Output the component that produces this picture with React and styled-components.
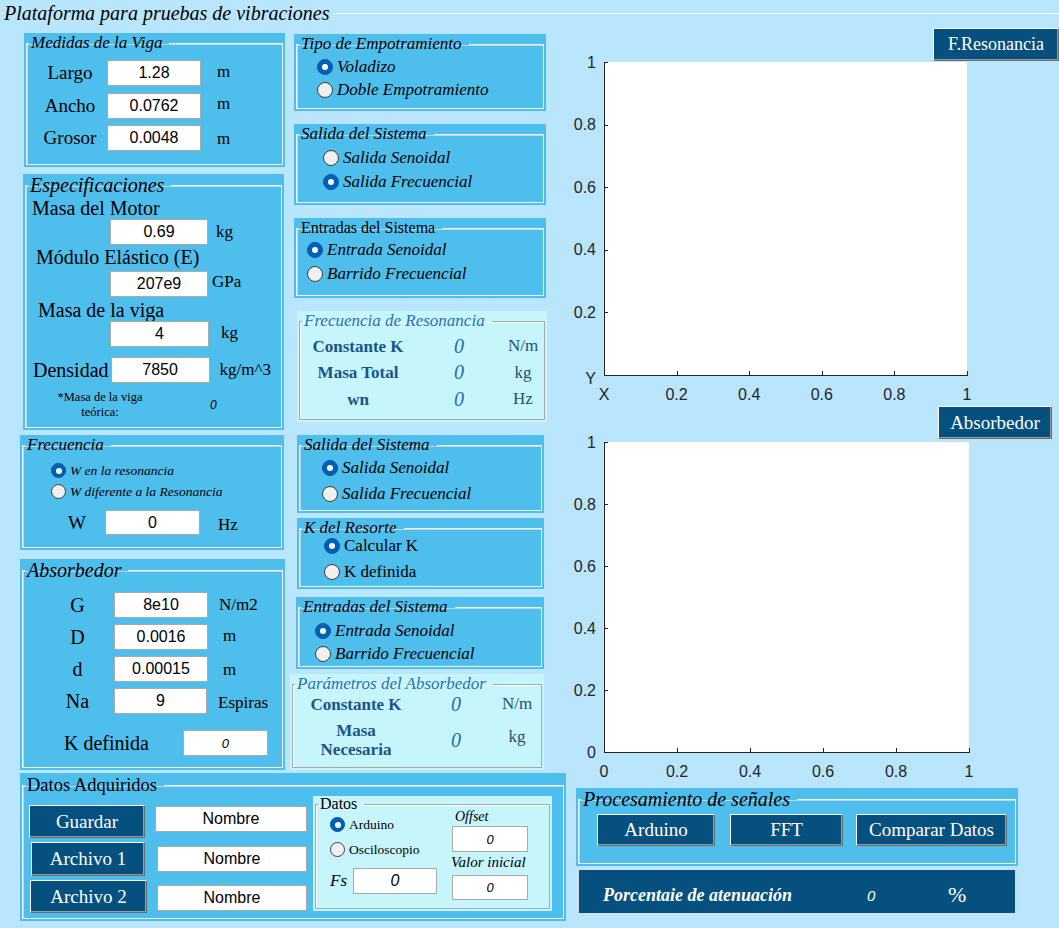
import React from "react"
import styled, { createGlobalStyle } from "styled-components"

const SERIF = '"Liberation Serif", "Times New Roman", serif'
const SANS = '"Liberation Sans", Arial, sans-serif'

const C = {
	page: "#b9e5fd",
	panel: "#4ebeed",
	dark: "#05507f",
	cyan: "#c6f5fc",
	title: "#2272b8",
	label: "#17548a",
	value: "#1f6cb0",
	unit: "#274e72",
}

const GlobalStyle = createGlobalStyle`
	html, body {
		margin: 0;
		padding: 0;
		background: ${C.page};
	}
	body {
		font-family: ${SERIF};
		overflow: hidden;
	}
`

const Window = styled.div`
	width: 1059px;
	height: 928px;
	overflow: hidden;
	background: ${C.page};
	color: #000;
`

const Header = styled.div`
	display: flex;
	align-items: center;
	height: 26px;
`

const HeaderRule = styled.div`
	height: 1px;
	background: #fff;
	width: ${p => (p.$w ? `${p.$w}px` : "auto")};
	flex: ${p => (p.$w ? "none" : 1)};
`

const HeaderTitle = styled.span`
	font-style: italic;
	font-size: 20px;
	padding: 0 4px 0 1px;
	line-height: 26px;
`

const Content = styled.div`
	display: flex;
	margin-top: 2px;
`

const LeftBlock = styled.div`
	width: 570px;
	display: flex;
	flex-direction: column;
	flex: none;
`

const TopRow = styled.div`
	display: flex;
`

const Column = styled.div`
	display: flex;
	flex-direction: column;
	width: ${p => p.$w}px;
	flex: none;
`

const PanelShell = styled.div`
	box-sizing: border-box;
	width: ${p => p.$w}px;
	height: ${p => p.$h}px;
	margin: ${p => p.$mt || 0}px 0 0 ${p => p.$ml || 0}px;
	padding: 0 2px 2px;
	background: ${p => (p.$light ? C.cyan : C.panel)};
	display: flex;
	flex-direction: column;
	flex: none;
`

const Frame = styled.fieldset`
	flex: 1;
	margin: 0;
	padding: 0;
	min-width: 0;
	border: 1px solid ${p => (p.$light ? "#a8a8a8" : "#f2f2f2")};
	box-shadow: ${p => (p.$light ? "inset 1px 1px 0 #fff" : "inset 1px 1px 0 #b8d8e8")};
`

const Legend = styled.legend`
	margin-left: 2px;
	padding: 0 7px 0 2px;
	font-family: ${SERIF};
	font-size: ${p => p.$size || 17}px;
	line-height: ${p => p.$lh || 20}px;
	font-style: ${p => (p.$plain ? "normal" : "italic")};
	color: ${p => p.$color || "#000"};
	white-space: nowrap;
`

function Panel({ title, w, h, mt, ml, light, size, lh, plain, color, children }) {
	return (
		<PanelShell $w={w} $h={h} $mt={mt} $ml={ml} $light={light}>
			<Frame $light={light}>
				<Legend $size={size} $lh={lh} $plain={plain} $color={color}>{title}</Legend>
				{children}
			</Frame>
		</PanelShell>
	)
}

const FormGrid = styled.div`
	display: grid;
	grid-template-columns: ${p => p.$cols};
	grid-auto-rows: ${p => p.$row || 26}px;
	${p => p.$rows && `grid-template-rows: ${p.$rows};`}
	row-gap: ${p => p.$gap || 0}px;
	align-items: center;
	padding: ${p => p.$pt || 0}px 0 0 ${p => p.$pl || 0}px;
`

const Label = styled.div`
	font-size: ${p => p.$size || 19}px;
	line-height: ${p => p.$lh || 22}px;
	text-align: ${p => p.$align || "center"};
	margin: ${p => p.$mt || 0}px 0 0 ${p => p.$ml || 0}px;
	white-space: nowrap;
	flex: none;
`

const Field = styled.div`
	box-sizing: border-box;
	width: ${p => p.$w}px;
	height: ${p => p.$h || 26}px;
	margin: ${p => p.$mt || 0}px 0 0 ${p => p.$ml || 0}px;
	background: #fff;
	border: 1px solid #a9a9a9;
	display: flex;
	align-items: center;
	justify-content: center;
	font-family: ${SANS};
	font-size: ${p => p.$size || 16}px;
	font-style: ${p => (p.$italic ? "italic" : "normal")};
	color: #000;
	flex: none;
	align-self: ${p => (p.$center ? "center" : "flex-start")};
`

const Unit = styled.span`
	font-size: 17px;
	margin-left: ${p => p.$ml || 0}px;
	margin-top: ${p => p.$mt || 0}px;
	white-space: nowrap;
`

const FieldRow = styled.div`
	display: flex;
	align-items: center;
	margin: ${p => p.$mt || 0}px 0 0 ${p => p.$ml || 0}px;
`

const Note = styled.div`
	width: 96px;
	margin-left: 26px;
	font-size: 12.5px;
	line-height: 15px;
	text-align: center;
`

const SmallValue = styled.span`
	font-family: ${SANS};
	font-style: italic;
	font-size: 12px;
	margin-left: ${p => p.$ml || 0}px;
`

const RadioList = styled.div`
	display: flex;
	flex-direction: column;
	margin-top: ${p => p.$pt || 0}px;
	padding-left: ${p => p.$pl || 0}px;
`

const RadioRow = styled.div`
	display: flex;
	align-items: center;
	gap: 4px;
	height: ${p => p.$h}px;
	font-size: ${p => p.$size || 17}px;
	font-style: ${p => (p.$plain ? "normal" : "italic")};
	white-space: nowrap;
`

const RadioDot = styled.span`
	position: relative;
	box-sizing: border-box;
	flex: none;
	width: ${p => p.$d || 16}px;
	height: ${p => p.$d || 16}px;
	border-radius: 50%;
	background: ${p => (p.$on ? "#0060b8" : "#f0f0f0")};
	border: 1px solid ${p => (p.$on ? "#0052a0" : "#3c3c3c")};

	&::after {
		content: "";
		display: ${p => (p.$on ? "block" : "none")};
		position: absolute;
		left: 50%;
		top: 50%;
		width: 6px;
		height: 6px;
		margin: -3px 0 0 -3px;
		border-radius: 50%;
		background: #fff;
	}
`

function Radio({ on, label, h, size, plain, d }) {
	return (
		<RadioRow $h={h} $size={size} $plain={plain}>
			<RadioDot $on={on} $d={d} />
			{label}
		</RadioRow>
	)
}

const InfoLabel = styled.div`
	font-weight: bold;
	font-size: 17px;
	line-height: 19px;
	color: ${C.label};
	text-align: center;
`

const InfoValue = styled.div`
	font-style: italic;
	font-size: 20px;
	color: ${C.value};
	text-align: center;
`

const InfoUnit = styled.div`
	font-size: 17px;
	color: ${C.unit};
	text-align: center;
	margin-top: ${p => p.$mt || 0}px;
`

const DarkButton = styled.button`
	box-sizing: border-box;
	flex: none;
	width: ${p => p.$w}px;
	height: ${p => p.$h || 33}px;
	margin: ${p => p.$mt || 0}px 0 0 ${p => p.$ml || 0}px;
	padding: 0;
	background: ${C.dark};
	color: #fff;
	border: 1px solid;
	border-color: #ffffff #6a6a6a #6a6a6a #ffffff;
	box-shadow: inset -1px -1px 0 #9a9a9a;
	font-family: ${SERIF};
	font-size: ${p => p.$size || 19}px;
	white-space: nowrap;
	cursor: pointer;
`

const ButtonBar = styled.div`
	display: flex;
	justify-content: flex-end;
	height: 33px;
	padding-right: ${p => p.$pr || 0}px;
`

const FileRow = styled.div`
	display: flex;
	align-items: flex-start;
	margin-top: ${p => p.$mt || 0}px;
`

const SplitRow = styled.div`
	display: flex;
`

const SubColumn = styled.div`
	display: flex;
	flex-direction: column;
	width: ${p => (p.$w ? `${p.$w}px` : "auto")};
	flex: none;
`

const CaptionItalic = styled.div`
	font-style: italic;
	font-size: ${p => p.$size}px;
	line-height: ${p => p.$lh}px;
	margin: ${p => p.$mt || 0}px 0 0 ${p => p.$ml || 0}px;
	white-space: nowrap;
`

const ProcessButtons = styled.div`
	display: flex;
	margin-top: 4px;
`

const ResultBar = styled.div`
	box-sizing: border-box;
	width: 438px;
	height: 45px;
	margin: 3px 0 0 8px;
	padding: 7px 0 0 24px;
	background: ${C.dark};
	border: 1px solid #dcdcdc;
	display: flex;
	align-items: center;
	color: #fff;
`

const ResultLabel = styled.span`
	width: 264px;
	font-style: italic;
	font-weight: bold;
	font-size: 18px;
`

const ResultValue = styled.span`
	width: 81px;
	font-family: ${SANS};
	font-style: italic;
	font-size: 15px;
`

const ResultUnit = styled.span`
	font-size: 22px;
`

const AxesSvg = styled.svg`
	display: block;
	overflow: visible;
	flex: none;
`

const TickText = styled.text`
	font-family: ${SANS};
	font-size: 16px;
	fill: #262626;
`

function Axes({ height, top, plotW, plotH, xLabels, yLabels }) {
	const left = 34
	const bottom = top + plotH
	const nx = xLabels.length - 1
	const ny = yLabels.length - 1
	return (
		<AxesSvg width={489} height={height}>
			<rect x={left} y={top} width={plotW} height={plotH} fill="#fff" />
			<g stroke="#262626" strokeWidth="1" shapeRendering="crispEdges" fill="none">
				<path d={`M${left + 0.5} ${top} V${bottom + 0.5} H${left + plotW + 0.5}`} />
				{yLabels.map((_, i) => {
					const y = Math.round(bottom - (i * plotH) / ny) + 0.5
					return <path key={`yt${i}`} d={`M${left} ${y} H${left + 4}`} />
				})}
				{xLabels.map((_, i) => {
					const x = Math.round(left + (i * plotW) / nx) + 0.5
					return <path key={`xt${i}`} d={`M${x} ${bottom} V${bottom - 4}`} />
				})}
			</g>
			{yLabels.map((l, i) => (
				<TickText
					key={`yl${i}`}
					x={left - 8}
					y={bottom - (i * plotH) / ny + (i === 0 && l === "Y" ? 3 : 0)}
					textAnchor="end"
					dominantBaseline="central"
				>
					{l}
				</TickText>
			))}
			{xLabels.map((l, i) => (
				<TickText
					key={`xl${i}`}
					x={left + (i * plotW) / nx}
					y={bottom + 19}
					textAnchor="middle"
					dominantBaseline="central"
				>
					{l}
				</TickText>
			))}
		</AxesSvg>
	)
}

const ticks = ["0.2", "0.4", "0.6", "0.8", "1"]

export default function App() {
	return (
		<Window>
			<GlobalStyle />
			<Header>
				<HeaderRule $w={3} />
				<HeaderTitle>Plataforma para pruebas de vibraciones</HeaderTitle>
				<HeaderRule />
			</Header>

			<Content>
				<LeftBlock>
					<TopRow>
						<Column $w={288}>
							<Panel title="Medidas de la Viga" w={261} h={134} mt={5} ml={24}>
								<FormGrid $cols="74px 94px auto" $pt={7} $pl={6} $gap={6.5}>
									<Label>Largo</Label><Field $w={94}>1.28</Field><Unit $ml={16} $mt={-3}>m</Unit>
									<Label>Ancho</Label><Field $w={94}>0.0762</Field><Unit $ml={16} $mt={-3}>m</Unit>
									<Label>Grosor</Label><Field $w={94}>0.0048</Field><Unit $ml={16} $mt={2}>m</Unit>
								</FormGrid>
							</Panel>

							<Panel title="Especificaciones" w={261} h={256} mt={7} ml={23} size={20} lh={22}>
								<Label $size={20} $align="left" $mt={1} $ml={6}>Masa del Motor</Label>
								<FieldRow $ml={84}>
									<Field $w={98}>0.69</Field><Unit $ml={8}>kg</Unit>
								</FieldRow>
								<Label $size={20} $align="left" $mt={1} $ml={10}>Módulo Elástico (E)</Label>
								<FieldRow $mt={3} $ml={84}>
									<Field $w={98}>207e9</Field><Unit $ml={4} $mt={-4}>GPa</Unit>
								</FieldRow>
								<Label $size={20} $align="left" $mt={2} $ml={12}>Masa de la viga</Label>
								<FieldRow $ml={84}>
									<Field $w={99}>4</Field><Unit $ml={12} $mt={-2}>kg</Unit>
								</FieldRow>
								<FieldRow $mt={10} $ml={7}>
									<Label $size={20} $align="left">Densidad</Label>
									<Field $w={99} $ml={2} $center>7850</Field>
									<Unit $ml={10}>kg/m^3</Unit>
								</FieldRow>
								<FieldRow $mt={7}>
									<Note>*Masa de la viga teórica:</Note>
									<SmallValue $ml={62}>0</SmallValue>
								</FieldRow>
							</Panel>

							<Panel title="Frecuencia" w={264} h={115} mt={5} ml={20}>
								<RadioList $pt={5} $pl={28}>
									<Radio on label="W en la resonancia" h={21} size={13.5} d={15} />
									<Radio label="W diferente a la Resonancia" h={21} size={13.5} d={15} />
								</RadioList>
								<FieldRow $mt={8} $ml={45}>
									<Label $size={19}>W</Label>
									<Field $w={95} $h={25} $ml={19} $center>0</Field>
									<Unit $ml={18} $mt={4}>Hz</Unit>
								</FieldRow>
							</Panel>

							<Panel title="Absorbedor" w={265} h={211} mt={9} ml={20} size={20} lh={22}>
								<FormGrid $cols="73px 94px auto" $pt={11} $pl={18} $gap={6}>
									<Label $size={20}>G</Label><Field $w={94}>8e10</Field><Unit $ml={11}>N/m2</Unit>
									<Label $size={20}>D</Label><Field $w={94}>0.0016</Field><Unit $ml={15} $mt={-3}>m</Unit>
									<Label $size={20}>d</Label><Field $w={94}>0.00015</Field><Unit $ml={15} $mt={2}>m</Unit>
									<Label $size={20}>Na</Label><Field $w={93}>9</Field><Unit $ml={10} $mt={4}>Espiras</Unit>
								</FormGrid>
								<FieldRow $mt={16} $ml={41}>
									<Label $size={20}>K definida</Label>
									<Field $w={85} $ml={34} $italic $size={13}>0</Field>
								</FieldRow>
							</Panel>
						</Column>

						<Column $w={282}>
							<Panel title="Tipo de Empotramiento" w={252} h={77} mt={6} ml={6}>
								<RadioList $pt={1} $pl={20}>
									<Radio on label="Voladizo" h={23} />
									<Radio label="Doble Empotramiento" h={23} />
								</RadioList>
							</Panel>

							<Panel title="Salida del Sistema" w={252} h={81} mt={13} ml={6}>
								<RadioList $pt={2} $pl={26}>
									<Radio label="Salida Senoidal" h={24} />
									<Radio on label="Salida Frecuencial" h={24} />
								</RadioList>
							</Panel>

							<Panel title="Entradas del Sistema" w={252} h={80} mt={13} ml={6} plain size={16}>
								<RadioList $pt={0} $pl={10}>
									<Radio on label="Entrada Senoidal" h={24} />
									<Radio label="Barrido Frecuencial" h={24} />
								</RadioList>
							</Panel>

							<Panel title="Frecuencia de Resonancia" w={250} h={111} mt={13} ml={9} light color={C.title}>
								<FormGrid $cols="116px 86px 1fr" $pt={2} $row={26.5}>
									<InfoLabel>Constante K</InfoLabel><InfoValue>0</InfoValue><InfoUnit>N/m</InfoUnit>
									<InfoLabel>Masa Total</InfoLabel><InfoValue>0</InfoValue><InfoUnit>kg</InfoUnit>
									<InfoLabel>wn</InfoLabel><InfoValue>0</InfoValue><InfoUnit>Hz</InfoUnit>
								</FormGrid>
							</Panel>

							<Panel title="Salida del Sistema" w={247} h={78} mt={13} ml={9}>
								<RadioList $pl={22}>
									<Radio on label="Salida Senoidal" h={26} />
									<Radio label="Salida Frecuencial" h={26} />
								</RadioList>
							</Panel>

							<Panel title="K del Resorte" w={247} h={71} mt={5} ml={9}>
								<RadioList $pt={-5} $pl={24}>
									<Radio on plain label="Calcular K" h={26} />
									<Radio plain label="K definida" h={26} />
								</RadioList>
							</Panel>

							<Panel title="Entradas del Sistema" w={248} h={72} mt={8} ml={8}>
								<RadioList $pt={2} $pl={16}>
									<Radio on label="Entrada Senoidal" h={23} />
									<Radio label="Barrido Frecuencial" h={23} />
								</RadioList>
							</Panel>

							<Panel title="Parámetros del Absorbedor" w={254} h={96} mt={5} ml={2} light color={C.title}>
								<FormGrid $cols="126px 74px 1fr" $rows="20px 40px" $gap={6}>
									<InfoLabel>Constante K</InfoLabel><InfoValue>0</InfoValue><InfoUnit>N/m</InfoUnit>
									<InfoLabel>Masa<br />Necesaria</InfoLabel><InfoValue>0</InfoValue><InfoUnit $mt={-6}>kg</InfoUnit>
								</FormGrid>
							</Panel>
						</Column>
					</TopRow>

					<Panel title="Datos Adquiridos" w={546} h={148} mt={3} ml={20} plain size={18.5} lh={24}>
						<SplitRow>
							<SubColumn $w={284}>
								<FileRow $mt={8}>
									<DarkButton $w={116} $ml={6}>Guardar</DarkButton>
									<Field $w={152} $ml={10} $mt={1}>Nombre</Field>
								</FileRow>
								<FileRow $mt={4}>
									<DarkButton $w={114} $h={34} $ml={8}>Archivo 1</DarkButton>
									<Field $w={150} $ml={12} $mt={4}>Nombre</Field>
								</FileRow>
								<FileRow $mt={4}>
									<DarkButton $w={117} $ml={7}>Archivo 2</DarkButton>
									<Field $w={150} $ml={10} $mt={5}>Nombre</Field>
								</FileRow>
							</SubColumn>

							<Panel title="Datos" w={239} h={115} mt={-1} ml={6} light plain size={16} lh={16}>
								<SplitRow>
									<SubColumn $w={134}>
										<RadioList $pl={14}>
											<Radio on plain label="Arduino" h={25} size={13.5} d={15} />
											<Radio plain label="Osciloscopio" h={25} size={13.5} d={15} />
										</RadioList>
										<FieldRow $mt={6} $ml={14}>
											<CaptionItalic $size={17} $lh={20}>Fs</CaptionItalic>
											<Field $w={84} $ml={6} $italic $center>0</Field>
										</FieldRow>
									</SubColumn>
									<SubColumn>
										<CaptionItalic $size={14} $lh={16} $mt={-3} $ml={5}>Offset</CaptionItalic>
										<Field $w={76} $ml={2} $mt={1} $italic $size={13}>0</Field>
										<CaptionItalic $size={15} $lh={18} $mt={1} $ml={1}>Valor inicial</CaptionItalic>
										<Field $w={76} $h={25} $ml={2} $mt={4} $italic $size={13}>0</Field>
									</SubColumn>
								</SplitRow>
							</Panel>
						</SplitRow>
					</Panel>
				</LeftBlock>

				<Column $w={489}>
					<ButtonBar>
						<DarkButton $w={126} $size={18}>F.Resonancia</DarkButton>
					</ButtonBar>
					<Axes
						height={345}
						top={1}
						plotW={363}
						plotH={313}
						xLabels={["X", ...ticks]}
						yLabels={["Y", ...ticks]}
					/>
					<ButtonBar $pr={7}>
						<DarkButton $w={114}>Absorbedor</DarkButton>
					</ButtonBar>
					<Axes
						height={349}
						top={3}
						plotW={365}
						plotH={310}
						xLabels={["0", ...ticks]}
						yLabels={["0", ...ticks]}
					/>
					<Panel title="Procesamiento de señales" w={442} h={78} ml={6} size={20} lh={22}>
						<ProcessButtons>
							<DarkButton $w={118} $h={32} $ml={18}>Arduino</DarkButton>
							<DarkButton $w={113} $h={32} $ml={15}>FFT</DarkButton>
							<DarkButton $w={151} $h={32} $ml={13}>Comparar Datos</DarkButton>
						</ProcessButtons>
					</Panel>
					<ResultBar>
						<ResultLabel>Porcentaie de atenuación</ResultLabel>
						<ResultValue>0</ResultValue>
						<ResultUnit>%</ResultUnit>
					</ResultBar>
				</Column>
			</Content>
		</Window>
	)
}
